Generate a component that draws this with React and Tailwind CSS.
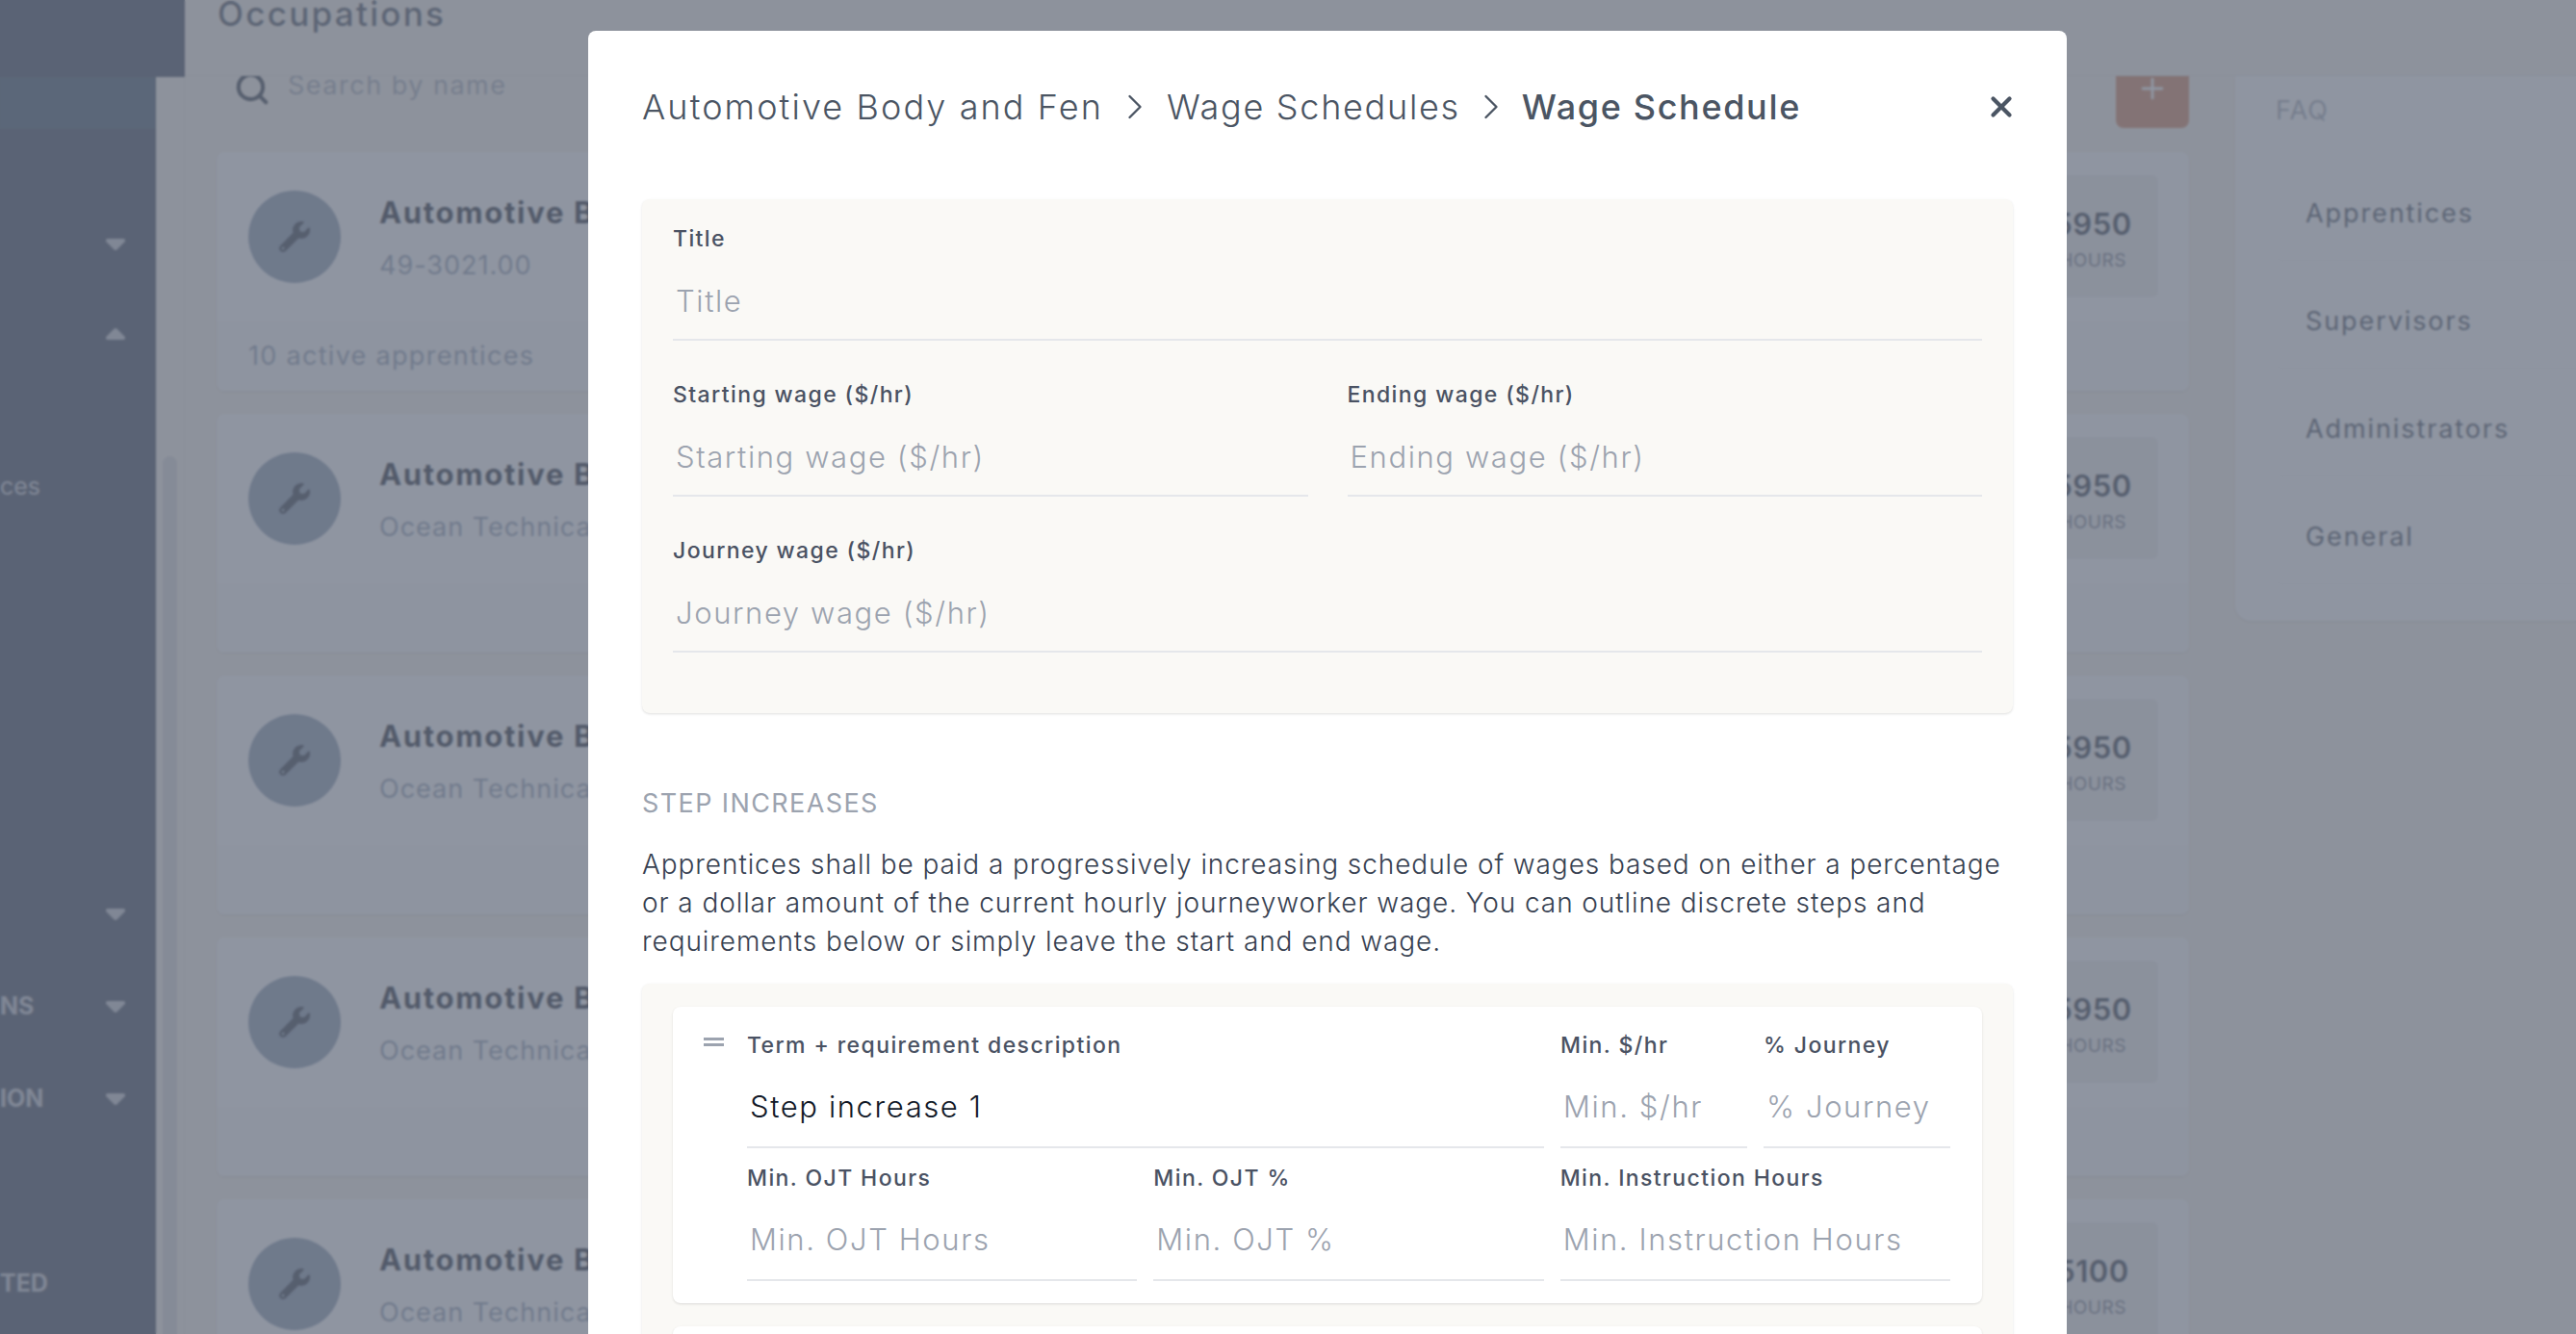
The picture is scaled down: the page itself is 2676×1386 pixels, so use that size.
import { Search, Plus, ChevronRight, X } from 'lucide-react';
import { FaWrench } from 'react-icons/fa';

const cards = [
  { sub: '49-3021.00', hours: 5950, footer: '10 active apprentices' },
  { sub: 'Ocean Technical', hours: 5950 },
  { sub: 'Ocean Technical', hours: 5950 },
  { sub: 'Ocean Technical', hours: 5950 },
  { sub: 'Ocean Technical', hours: 5100 },
];

function Caret({ up }) {
  return (
    <svg width="20" height="12" viewBox="0 0 20 12" className={up ? 'rotate-180' : ''}>
      <path d="M2 0h16a2 2 0 0 1 1.6 3.2l-8 8a2.2 2.2 0 0 1-3.2 0l-8-8A2 2 0 0 1 2 0z" fill="#c2c6d0" />
    </svg>
  );
}

function SideRow({ label, caret, up, light, className }) {
  return (
    <div className={`flex h-[48px] items-center justify-between pr-[32px] ${className}`}>
      <span className={light ? 'text-[25px] text-[#c2c6d0]' : 'text-[25px] font-bold text-[#c2c6d0]'}>{label}</span>
      {caret && <Caret up={up} />}
    </div>
  );
}

function Sidebar() {
  return (
    <div className="flex w-[192px] shrink-0 flex-col">
      <div className="h-[80px] bg-[#2f3a50]" />
      <div className="flex min-h-0 flex-1">
        <div className="w-[162px] bg-[#2f3a50]">
          <div className="h-[54px] bg-[#33485f]" />
          <SideRow caret className="mt-[96px]" />
          <SideRow caret up className="mt-[45px]" />
          <SideRow label="ces" light className="mt-[111px]" />
          <SideRow caret className="mt-[396px]" />
          <SideRow label="NS" caret className="mt-[48px]" />
          <SideRow label="ION" caret className="mt-[48px]" />
          <SideRow label="TED" className="mt-[144px]" />
        </div>
        <div className="flex-1 border-r border-[#e5e3df] px-[7px] pt-[394px]">
          <div className="h-full rounded-t-full bg-[#d6d6d6]" />
        </div>
      </div>
    </div>
  );
}

function OccupationCard({ card }) {
  return (
    <div className="flex h-[248px] shrink-0 flex-col overflow-hidden rounded-[8px] bg-white shadow-sm">
      <div className="flex h-[176px] items-start pl-[33px] pr-[32px] pt-[24px]">
        <div className="mt-[16px] flex h-[96px] w-[96px] shrink-0 items-center justify-center rounded-full bg-[#7f92a8]">
          <FaWrench className="h-[32px] w-[32px] text-[#1f2937]" />
        </div>
        <div className="ml-[40px] mt-[17px] whitespace-nowrap">
          <div className="text-[31px] font-bold leading-[44px] tracking-[1.7px] text-[#111827]">Automotive Body and Fender</div>
          <div className="mt-[14px] text-[27px] leading-[38px] tracking-[1px] text-[#8896ab]">{card.sub}</div>
        </div>
        <div className="ml-auto flex h-[127px] w-[136px] flex-col items-center justify-center rounded-[6px] bg-[#efeeec] pt-[6px]">
          <div className="text-[31px] font-semibold leading-[40px] tracking-[0.5px] text-[#1f2937]">{card.hours}</div>
          <div className="mt-[5px] text-[19px] leading-[26px] tracking-[0.5px] text-[#6b7280]">HOURS</div>
        </div>
      </div>
      <div className="flex h-[72px] items-center bg-[#fcfbfa] px-[33px]">
        {card.footer && <span className="text-[27px] tracking-[1.3px] text-[#8896ab]">{card.footer}</span>}
      </div>
    </div>
  );
}

function FaqPanel() {
  return (
    <div className="ml-[48px] h-[566px] w-[400px] shrink-0 rounded-bl-[16px] bg-white pl-[39px] pt-[6px] shadow-sm">
      <div className="h-[60px] pl-[3px] text-[27px] leading-[60px] tracking-[1px] text-[#9ca3af]">FAQ</div>
      <div className="mt-[29px] flex flex-col gap-[16px]">
        {['Apprentices', 'Supervisors', 'Administrators', 'General'].map((name) => (
          <div key={name} className="flex h-[96px] items-center rounded-l-[10px] bg-white pl-[34px] text-[27px] tracking-[1.9px] text-[#374151] shadow-[0_1px_2px_rgba(0,0,0,0.04)]">
            {name}
          </div>
        ))}
      </div>
    </div>
  );
}

function Main() {
  return (
    <div className="flex min-w-0 flex-1 flex-col">
      <div className="z-10 h-[79px] shrink-0 overflow-hidden border-b border-[#e5e3df] bg-[#f8f3ea] pl-[34px]">
        <div className="mt-[-11px] text-[35px] font-medium leading-[50px] tracking-[2.3px] text-[#374151]">Occupations</div>
      </div>
      <div className="flex min-h-0 flex-1 overflow-hidden">
        <div className="flex w-[2082px] shrink-0 flex-col pl-[33px]">
          <div className="mt-[-28px] flex h-[82px] shrink-0 items-center">
            <Search className="ml-[18px] h-[38px] w-[38px] text-[#1f2937]" strokeWidth={2.6} />
            <span className="ml-[18px] mt-[-5px] text-[27px] tracking-[1.5px] text-[#9ca3af]">Search by name</span>
            <div className="ml-auto flex h-[82px] w-[76px] items-center justify-center rounded-[8px] bg-[#cf7a52]">
              <Plus className="h-[34px] w-[34px] text-white" />
            </div>
          </div>
          <div className="mt-[25px] flex flex-col gap-[24px]">
            {cards.map((card, i) => (
              <OccupationCard key={i} card={card} />
            ))}
          </div>
        </div>
        <FaqPanel />
      </div>
    </div>
  );
}

function Field({ label, placeholder, value, height = 'h-[90px]', padTop = 'pt-[8px]' }) {
  return (
    <label className="block min-w-0">
      <span className="block h-[32px] text-[23px] font-medium leading-[32px] tracking-[1.4px] text-[#4a5263]">{label}</span>
      <input
        placeholder={placeholder}
        defaultValue={value}
        className={`block w-full border-b-2 border-[#e5e7eb] bg-transparent px-[3px] text-[31px] font-light tracking-[1.6px] text-[#111827] outline-none placeholder:text-[#9ca3af] ${height} ${padTop}`}
      />
    </label>
  );
}

function StepCard() {
  return (
    <div className="flex h-[308px] rounded-[8px] bg-white pl-[32px] pr-[33px] pt-[24px] shadow">
      <div className="flex h-[32px] w-[45px] shrink-0 flex-col gap-[3px] pt-[8px]">
        <div className="h-[3px] w-[21px] bg-[#9ca3af]" />
        <div className="h-[3px] w-[21px] bg-[#9ca3af]" />
      </div>
      <div className="flex-1">
        <div className="grid grid-cols-[828px_1fr_1fr] gap-x-[17px]">
          <Field label="Term + requirement description" value="Step increase 1" height="h-[91px]" padTop="pt-[6px]" />
          <Field label="Min. $/hr" placeholder="Min. $/hr" height="h-[91px]" padTop="pt-[6px]" />
          <Field label="% Journey" placeholder="% Journey" height="h-[91px]" padTop="pt-[6px]" />
        </div>
        <div className="mt-[15px] grid grid-cols-3 gap-x-[17px]">
          <Field label="Min. OJT Hours" placeholder="Min. OJT Hours" height="h-[91px]" padTop="pt-[6px]" />
          <Field label="Min. OJT %" placeholder="Min. OJT %" height="h-[91px]" padTop="pt-[6px]" />
          <Field label="Min. Instruction Hours" placeholder="Min. Instruction Hours" height="h-[91px]" padTop="pt-[6px]" />
        </div>
      </div>
    </div>
  );
}

function WageModal() {
  return (
    <div className="h-[1500px] w-[1536px] shrink-0 rounded-[8px] bg-white px-[56px] pt-[44px]">
      {/* Breadcrumb */}
      <div className="flex h-[70px] items-center whitespace-nowrap text-[36px] font-light text-[#4b5563]">
        <span className="tracking-[2.1px]">Automotive Body and Fen</span>
        <ChevronRight className="mx-[11px] h-[44px] w-[44px]" strokeWidth={1.3} />
        <span className="tracking-[1.7px]">Wage Schedules</span>
        <ChevronRight className="mx-[10px] h-[44px] w-[44px]" strokeWidth={1.3} />
        <span className="font-medium tracking-[1.65px]">Wage Schedule</span>
        <X className="ml-auto mr-[-5px] h-[34px] w-[34px]" strokeWidth={3} />
      </div>

      {/* Wage details */}
      <div className="mt-[61px] h-[534px] rounded-[8px] bg-[#faf9f6] px-[32px] pt-[25px] shadow-sm">
        <Field label="Title" placeholder="Title" />
        <div className="mt-[40px] grid grid-cols-2 gap-x-[41px]">
          <Field label="Starting wage ($/hr)" placeholder="Starting wage ($/hr)" />
          <Field label="Ending wage ($/hr)" placeholder="Ending wage ($/hr)" />
        </div>
        <div className="mt-[40px]">
          <Field label="Journey wage ($/hr)" placeholder="Journey wage ($/hr)" />
        </div>
      </div>

      {/* Step increases */}
      <div className="mt-[78px] h-[32px] text-[27px] leading-[32px] tracking-[1.4px] text-[#9ca3af]">STEP INCREASES</div>
      <p className="mt-[27px] text-[28px] font-light leading-[40px] tracking-[0.92px] text-[#374151]">
        Apprentices shall be paid a progressively increasing schedule of wages based on either a percentage
        or a dollar amount of the current hourly journeyworker wage. You can outline discrete steps and
        requirements below or simply leave the start and end wage.
      </p>
      <div className="mt-[24px] flex flex-col gap-[24px] rounded-[8px] bg-[#faf9f6] px-[32px] pt-[24px] shadow-sm">
        <StepCard />
        <StepCard />
      </div>
    </div>
  );
}

export default function App() {
  return (
    <div className="relative flex h-screen w-full overflow-hidden bg-[#f8f3ea] font-['Inter',sans-serif]">
      <Sidebar />
      <Main />
      {/* Modal backdrop */}
      <div className="absolute inset-0 z-20 bg-gray-500/75 backdrop-blur-[1px]" />
      <div className="absolute inset-0 z-30 flex justify-center overflow-hidden pl-[82px] pt-[32px]">
        <WageModal />
      </div>
    </div>
  );
}
